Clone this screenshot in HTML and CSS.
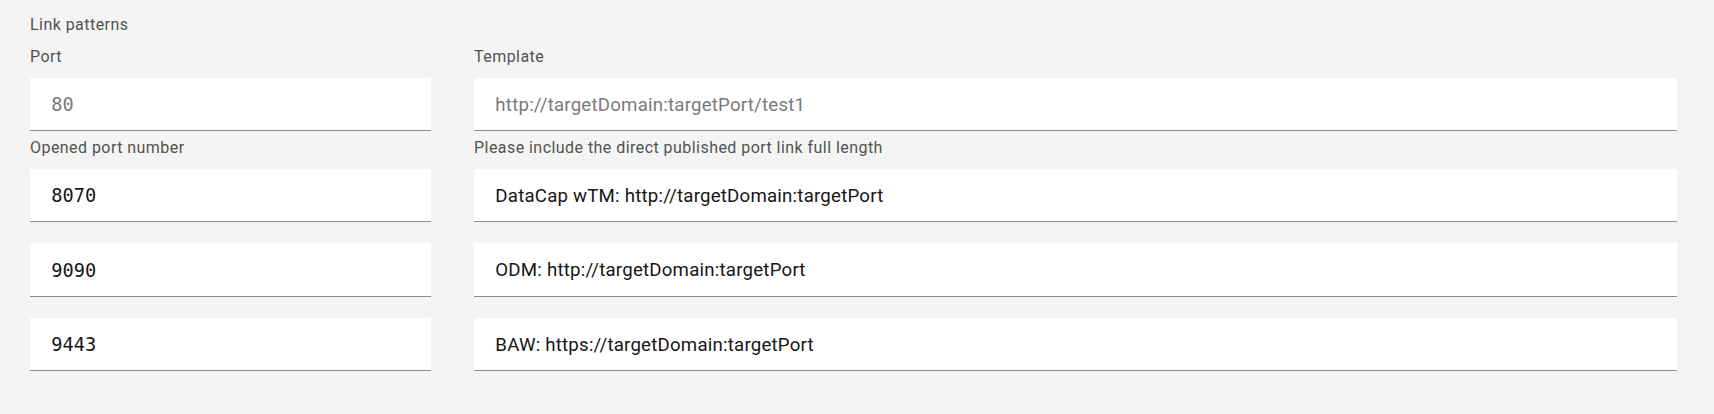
FILE: index.html
```html
<!DOCTYPE html>
<html lang="en">
<head>
<meta charset="utf-8">
<title>Link patterns</title>
<link rel="stylesheet" href="styles.css">
</head>
<body>
<div class="page">
  <div class="section-title">Link patterns</div>
  <div class="row head-row">
    <div class="col col-port">
      <div class="label">Port</div>
      <div class="input mono placeholder">80</div>
      <div class="helper">Opened port number</div>
    </div>
    <div class="col col-link">
      <div class="label">Template</div>
      <div class="input placeholder">http://targetDomain:targetPort/test1</div>
      <div class="helper">Please include the direct published port link full length</div>
    </div>
  </div>
  <div class="rows">
    <div class="row">
      <div class="col col-port"><div class="input mono">8070</div></div>
      <div class="col col-link"><div class="input">DataCap wTM: http://targetDomain:targetPort</div></div>
    </div>
    <div class="row">
      <div class="col col-port"><div class="input mono">9090</div></div>
      <div class="col col-link"><div class="input">ODM: http://targetDomain:targetPort</div></div>
    </div>
    <div class="row">
      <div class="col col-port"><div class="input mono">9443</div></div>
      <div class="col col-link"><div class="input">BAW: https://targetDomain:targetPort</div></div>
    </div>
  </div>
</div>
</body>
</html>
```
FILE: styles.css
```css
html, body {
  margin: 0;
  padding: 0;
  background: #f4f4f4;
}
body {
  font-family: "Roboto", "Liberation Sans", sans-serif;
  color: #161616;
}
.page {
  padding: 14px 37px 0 30px;
}
.section-title, .label, .helper {
  font-size: 16px;
  line-height: 21.33px;
  letter-spacing: 0.45px;
  color: #525252;
}
.section-title {
  margin-bottom: 10.67px;
}
.label {
  margin-bottom: 10.67px;
}
.helper {
  margin-top: 5.33px;
}
.head-row {
  margin-bottom: 10.67px;
}
.rows {
  display: flex;
  flex-direction: column;
  gap: 21.33px;
}
.row {
  display: flex;
  gap: 43px;
}
.col-port {
  flex: 0 0 401px;
}
.col-link {
  flex: 1 1 auto;
  min-width: 0;
}
.input {
  box-sizing: border-box;
  height: 53.33px;
  background: #ffffff;
  border-bottom: 1.33px solid #8d8d8d;
  padding: 1.5px 21.33px 0;
  display: flex;
  align-items: center;
  font-size: 18.67px;
  letter-spacing: 0.21px;
  white-space: nowrap;
}
.mono {
  font-family: "DejaVu Sans Mono", "Liberation Mono", monospace;
  letter-spacing: 0;
}
.placeholder {
  color: #7a7a7a;
}
```
